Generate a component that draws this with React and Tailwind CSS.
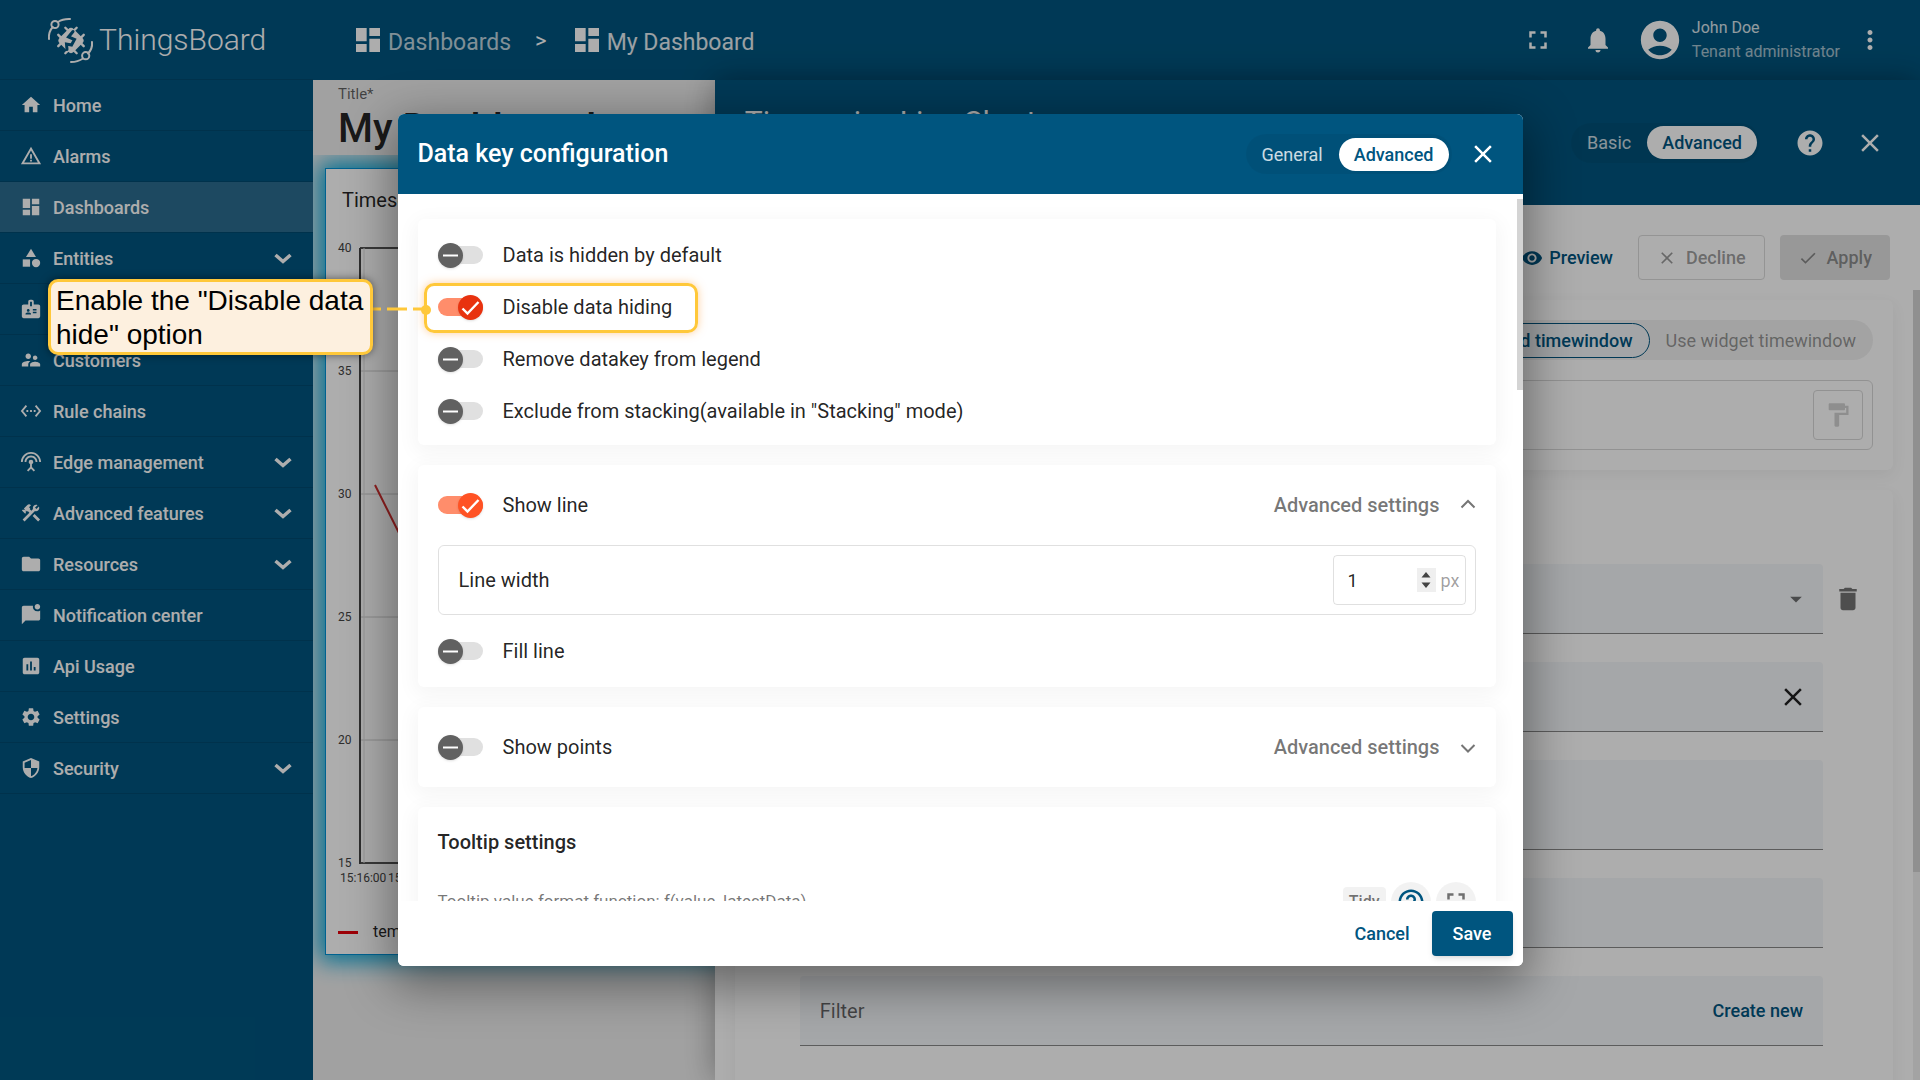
import { useState } from 'react';
import {
  MdHome, MdWarningAmber, MdDashboard, MdCategory, MdBadge, MdSupervisorAccount,
  MdSettingsEthernet, MdSettingsInputAntenna, MdConstruction, MdFolder, MdMarkChatUnread,
  MdInsertChart, MdSettings, MdSecurity, MdNotifications, MdAccountCircle, MdMoreVert,
  MdFullscreen, MdHelp, MdClose, MdVisibility, MdDone, MdFormatPaint, MdDelete,
  MdHelpOutline, MdArrowDropDown,
} from 'react-icons/md';

const menu = [
  { name: 'Home', icon: MdHome },
  { name: 'Alarms', icon: MdWarningAmber },
  { name: 'Dashboards', icon: MdDashboard, active: true },
  { name: 'Entities', icon: MdCategory, expandable: true },
  { name: 'Profiles', icon: MdBadge, expandable: true, covered: true },
  { name: 'Customers', icon: MdSupervisorAccount },
  { name: 'Rule chains', icon: MdSettingsEthernet },
  { name: 'Edge management', icon: MdSettingsInputAntenna, expandable: true },
  { name: 'Advanced features', icon: MdConstruction, expandable: true },
  { name: 'Resources', icon: MdFolder, expandable: true },
  { name: 'Notification center', icon: MdMarkChatUnread },
  { name: 'Api Usage', icon: MdInsertChart },
  { name: 'Settings', icon: MdSettings },
  { name: 'Security', icon: MdSecurity, expandable: true },
];

const Logo = () => (
  <svg viewBox="0 0 48 48" className="w-12 h-12" fill="none" stroke="white" strokeWidth="2" strokeLinecap="round">
    <path d="M2 23C1.500 18 3 14 5.800 11M11 6C14 4 18 2.800 23 3" />
    <circle cx="8" cy="8.500" r="3.600" />
    <path d="M45 26C45.500 31 44 34.500 41 37.500M36 42.500C33 44.500 29 46 24 46" />
    <circle cx="38.700" cy="39.700" r="3.600" />
    <g transform="translate(24 24.500) rotate(45)">
      <rect x="-10" y="-10" width="20" height="20" rx="4" fill="white" stroke="none" />
      <path d="M-5 -13V13M5 -13V13M-13 -5H13M-13 5H13" strokeWidth="2.400" />
    </g>
    <path d="M26 15.500l-4.500 5.500 6 2.500-3 5.500-5-1 .5 5.500" stroke="#00557f" strokeWidth="3" />
  </svg>
);

const Sidebar = () => (
  <aside className="w-[313px] shrink-0 bg-[#00557f] text-white">
    <div className="h-[79px] flex items-center gap-1 pl-[47px]">
      <Logo />
      <span className="text-[30px] leading-10 font-light">ThingsBoard</span>
    </div>
    <nav>
      {menu.map(({ name, icon: Icon, active, expandable, covered }) => (
        <a
          key={name}
          href="#"
          aria-label={name}
          className={`h-[51px] flex items-center px-5 border-t border-[#004b70] ${active ? 'bg-[#2b6c8f]' : ''}`}
        >
          <Icon className="w-[22px] h-[22px] mr-[11px] shrink-0" />
          {!covered && <span className="flex-1 text-[18px] font-medium">{name}</span>}
          {expandable && !covered && (
            <svg viewBox="0 0 20 20" className="w-5 h-5" fill="none" stroke="white" strokeWidth="3.500">
              <path d="M2.500 7l7.500 6.500 7.500-6.500" />
            </svg>
          )}
        </a>
      ))}
      <div className="border-t border-[#004b70]" />
    </nav>
  </aside>
);

const TopBar = () => (
  <header className="h-20 shrink-0 flex items-center bg-[#00557f] text-white pl-[39px] pr-[35px]">
    <a href="#" className="flex items-center gap-1 text-[23px]">
      <MdDashboard className="w-8 h-8" />
      <span className="pt-[6px] text-white/75">Dashboards</span>
    </a>
    <span className="px-6 text-[22px]">&gt;</span>
    <a href="#" className="flex items-center gap-1 text-[23px]">
      <MdDashboard className="w-8 h-8" />
      <span className="pt-[6px] text-white/90">My Dashboard</span>
    </a>
    <div className="ml-auto flex items-center">
      <button aria-label="Fullscreen"><MdFullscreen className="w-[30px] h-[30px]" /></button>
      <button aria-label="Notifications" className="ml-[30px]"><MdNotifications className="w-[30px] h-[30px]" /></button>
      <MdAccountCircle className="w-[46px] h-[46px] ml-6" />
      <div className="ml-[9px] leading-6">
        <p className="text-[16px] text-white/85">John Doe</p>
        <p className="text-[16px] text-white/65">Tenant administrator</p>
      </div>
      <button aria-label="More" className="ml-[15px]"><MdMoreVert className="w-[30px] h-[30px]" /></button>
    </div>
  </header>
);

const ticks = [40, 35, 30, 25, 20, 15];

const Chart = () => (
  <svg className="w-[380px] h-[660px]" fontSize="12" fill="#444">
    {ticks.map((t, i) => (
      <g key={t}>
        <line x1="34" x2="380" y1={19 + i * 123} y2={19 + i * 123} stroke={i === 0 || i === 5 ? '#555' : '#ccc'} strokeWidth={i === 0 || i === 5 ? 2 : 1} />
        <text x="12" y={23 + i * 123}>{t}</text>
      </g>
    ))}
    <line x1="38" x2="38" y1="19" y2="634" stroke="#ddd" />
    <line x1="34" x2="34" y1="19" y2="635" stroke="#444" strokeWidth="2" />
    <text x="14" y="653">15:16:00</text>
    <text x="62" y="653">15:16:05</text>
    <polyline points="49,256 78,314 120,396" fill="none" stroke="#d32f2f" strokeWidth="2" />
  </svg>
);

const Dashboard = () => (
  <section className="flex-1 min-w-0 overflow-hidden bg-[#eee]">
    <div className="h-[75px] pl-[25px] pt-[2px]">
      <p className="text-[15px] leading-6 text-black/60">Title*</p>
      <h1 className="text-[40px] leading-[46px] font-medium whitespace-nowrap">My Dashboard</h1>
    </div>
    <div className="overflow-hidden pt-[13px] pl-3 h-[930px]">
      <div className="w-[600px] h-[787px] bg-white border border-[#0091d5] shadow-[0_0_22px_6px_#00a5d8]">
        <p className="h-[60px] pl-4 pt-4 text-[20px] leading-[30px]">Timeseries Line Chart</p>
        <Chart />
        <div className="flex items-center pl-3 pt-[31px] text-[16px] leading-6">
          <span className="w-5 h-[3px] bg-red-600 mr-[15px]" />
          temperature
        </div>
      </div>
    </div>
  </section>
);

// Rounded two-option toggle used in dialog headers
const HeaderToggle = ({ first, second }) => (
  <div className="h-10 flex items-center rounded-full bg-black/5 pl-4 pr-[3px] text-[18px]">
    <button className="text-white/80 mr-4">{first}</button>
    <button className="h-[33px] px-[15px] rounded-full bg-white text-[#00557f] font-medium">{second}</button>
  </div>
);

const fieldClass = 'bg-[#f4f6f9] border-b border-[#888] rounded-t';

const WidgetDrawer = () => (
  <section className="w-3/4 shrink-0 flex flex-col bg-white shadow-[0_0_30px_rgba(0,0,0,0.35)]">
    <div className="h-[125px] shrink-0 flex items-center bg-[#00557f] text-white pl-[30px] pr-[35px]">
      <h2 className="flex-1 self-start mt-[22px] text-[30px] leading-10">Timeseries Line Chart</h2>
      <HeaderToggle first="Basic" second="Advanced" />
      <button aria-label="Help" className="ml-[35px]"><MdHelp className="w-[30px] h-[30px]" /></button>
      <button aria-label="Close" className="ml-[30px]"><MdClose className="w-[30px] h-[30px]" /></button>
    </div>
    <div className="h-[85px] shrink-0 flex items-center justify-end pr-[30px] pt-5 text-[18px] font-medium">
      <button className="flex items-center gap-[6px] text-[#00557f] mr-[25px]">
        <MdVisibility className="w-[22px] h-[22px]" />
        Preview
      </button>
      <button className="h-[45px] flex items-center gap-[9px] px-[18px] mr-[15px] rounded border border-[#dadada] text-black/40">
        <MdClose className="w-5 h-5" />
        Decline
      </button>
      <button className="h-[45px] flex items-center gap-[9px] px-[18px] rounded bg-black/12 text-black/40">
        <MdDone className="w-5 h-5" />
        Apply
      </button>
    </div>
    <div className="flex-1 min-h-0 flex">
      <div className="flex-1 pl-5 pr-5 pt-[10px] overflow-hidden">
        <div className="rounded-md bg-white p-5 shadow-[0_5px_16px_rgba(0,0,0,0.06)]">
          <div className="flex justify-end">
            <div className="h-10 flex items-center rounded-full bg-black/6 p-[3px] pr-[17px] text-[18px]">
              <button className="h-[35px] px-4 mr-4 rounded-full border border-[#00557f] bg-[#f0f4f7] text-[#00557f] font-medium">
                Use dashboard timewindow
              </button>
              <button className="text-black/40">Use widget timewindow</button>
            </div>
          </div>
          <div className="h-[70px] mt-5 flex items-center justify-end pr-[9px] rounded-md border border-[#d8d8d8]">
            <button aria-label="Timewindow style" className="w-[50px] h-[50px] flex items-center justify-center rounded border border-[#d8d8d8]">
              <MdFormatPaint className="w-[28px] h-[28px] text-black/18" />
            </button>
          </div>
        </div>
        <div className="mt-5 h-[700px] rounded-md bg-white pt-[74px] pl-[65px] pr-5 shadow-[0_5px_16px_rgba(0,0,0,0.06)]">
          <div className="flex items-center">
            <div className={`flex-1 h-[70px] flex items-center relative ${fieldClass}`}>
              <select aria-label="Datasource type" className="w-full h-full appearance-none bg-transparent" />
              <MdArrowDropDown className="absolute right-[13px] w-[28px] h-[28px] text-black/55 pointer-events-none" />
            </div>
            <button aria-label="Remove datasource" className="w-[50px] flex justify-center">
              <MdDelete className="w-[30px] h-[30px] text-black/55" />
            </button>
          </div>
          <div className="mr-[50px] mt-7 flex flex-col gap-7 text-[20px]">
            <div className={`h-[70px] flex items-center justify-end pr-[15px] ${fieldClass}`}>
              <button aria-label="Clear"><MdClose className="w-[30px] h-[30px]" /></button>
            </div>
            <input aria-label="Data keys" className={`h-[90px] ${fieldClass}`} />
            <input aria-label="Latest data keys" className={`h-[70px] ${fieldClass}`} />
            <div className={`h-[70px] flex items-center px-5 ${fieldClass}`}>
              <input aria-label="Filter" placeholder="Filter" className="flex-1 bg-transparent placeholder:text-black/60" />
              <button className="text-[18px] font-medium text-[#00557f]">Create new</button>
            </div>
          </div>
        </div>
      </div>
      <div className="w-[7px] bg-[#f1f1f1]">
        <div className="h-[582px] bg-[#d4d4d4]" />
      </div>
    </div>
  </section>
);

const Switch = ({ label, defaultOn = false, strong = false }) => {
  const [on, setOn] = useState(defaultOn);
  const thumbOn = strong ? 'bg-[#e8320f]' : 'bg-[#ff5224]';
  return (
    <label className="h-8 flex items-center gap-5 text-[20px] cursor-pointer">
      <input type="checkbox" className="sr-only" checked={on} onChange={() => setOn(!on)} />
      <span className={`w-[45px] h-[18px] rounded-full flex items-center ${on ? 'bg-[#ff8d6b] justify-end' : 'bg-[#e0e0e0]'}`}>
        <span className={`w-[25px] h-[25px] rounded-full shrink-0 shadow ${on ? thumbOn : 'bg-[#616161]'}`}>
          <svg viewBox="0 0 25 25" fill="none" stroke="white" strokeWidth="2">
            {on ? <path d="M4.500 13.500l5 5L20.500 7" strokeWidth="2.400" /> : <path d="M5 12.500h15" />}
          </svg>
        </span>
      </span>
      {label}
    </label>
  );
};

const AdvancedToggle = ({ open }) => (
  <button className="flex items-center gap-5 text-[20px] font-medium text-black/54">
    Advanced settings
    <svg viewBox="0 0 16 16" className="w-4 h-4" fill="none" stroke="currentColor" strokeWidth="2">
      {open ? <path d="M1.500 10.500L8 4l6.500 6.500" /> : <path d="M1.500 6L8 12.500 14.500 6" />}
    </svg>
  </button>
);

const Card = ({ children, className = '' }) => (
  <div className={`rounded-md bg-white shadow-[0_5px_20px_4px_rgba(0,0,0,0.04)] ${className}`}>{children}</div>
);

const DataKeyDialog = () => (
  <div role="dialog" aria-label="Data key configuration" className="relative w-[1125px] h-[852px] max-h-[80vh] flex flex-col rounded-md overflow-hidden bg-white text-black/87">
    <div className="h-20 shrink-0 flex items-center bg-[#00557f] text-white pl-5 pr-[25px]">
      <h2 className="flex-1 text-[25px] font-medium">Data key configuration</h2>
      <HeaderToggle first="General" second="Advanced" />
      <button aria-label="Close" className="ml-4"><MdClose className="w-[30px] h-[30px]" /></button>
    </div>
    <div className="flex-1 min-h-0 flex overflow-hidden">
      <div className="flex-1 flex flex-col gap-5 pl-5 pr-[21px] pt-[25px]">
        <Card className="p-5 pb-[18px] flex flex-col gap-5">
          <Switch label="Data is hidden by default" />
          <Switch label="Disable data hiding" defaultOn strong />
          <Switch label="Remove datakey from legend" />
          <Switch label={'Exclude from stacking(available in "Stacking" mode)'} />
        </Card>
        <Card className="p-5">
          <div className="h-10 flex items-center justify-between">
            <Switch label="Show line" defaultOn />
            <AdvancedToggle open />
          </div>
          <div className="h-[70px] my-5 flex items-center justify-between pl-5 pr-[9px] rounded-md border border-black/12">
            <label htmlFor="line-width" className="text-[20px]">Line width</label>
            <div className="w-[133px] h-[50px] flex items-center pl-[14px] pr-[5px] rounded border border-black/12">
              <input id="line-width" type="text" inputMode="numeric" defaultValue="1" className="min-w-0 flex-1 text-[18px]" />
              <span className="w-[19px] h-6 mr-[5px] flex items-center justify-center bg-[#efefef]">
                <svg viewBox="0 0 10 16" className="w-[10px] h-4" fill="#444">
                  <path d="M5 0l4.500 5.500h-9zM5 16l4.500-5.500h-9z" />
                </svg>
              </span>
              <span className="text-[18px] text-black/38">px</span>
            </div>
          </div>
          <Switch label="Fill line" />
        </Card>
        <Card className="p-5">
          <div className="h-10 flex items-center justify-between">
            <Switch label="Show points" />
            <AdvancedToggle />
          </div>
        </Card>
        <Card className="p-5 flex flex-col gap-[25px]">
          <h3 className="text-[20px] leading-[30px] font-medium">Tooltip settings</h3>
          <div className="h-10 flex items-center gap-[5px] text-black/54">
            <span className="flex-1 text-[17px]">Tooltip value format function: f(value, latestData)</span>
            <button className="h-[30px] px-[6px] rounded bg-black/5 text-[16px] font-medium">Tidy</button>
            <button aria-label="Function help" className="w-10 h-10 flex items-center justify-center rounded-full bg-black/5 text-[#00557f]">
              <MdHelpOutline className="w-[30px] h-[30px]" />
            </button>
            <button aria-label="Expand editor" className="w-10 h-10 flex items-center justify-center rounded-full bg-black/5">
              <MdFullscreen className="w-[30px] h-[30px]" />
            </button>
          </div>
        </Card>
      </div>
      <div className="w-[6px] pt-[5px]">
        <div className="h-[191px] bg-[#d4d4d4]" />
      </div>
    </div>
    <div className="h-[65px] shrink-0 flex items-center justify-end gap-[22px] pr-[10px] bg-white text-[18px] font-medium relative">
      <button className="text-[#00557f]">Cancel</button>
      <button className="h-[45px] px-[21px] rounded bg-[#00557f] text-white shadow-md">Save</button>
    </div>
  </div>
);

// Guide note with a dashed pointer to the highlighted switch
const Callout = () => (
  <>
    <div className="absolute left-[424px] top-[283px] w-[274px] h-[50px] rounded-[10px] border-3 border-[#ffc83a] shadow-[0_0_8px_rgba(255,160,60,0.5)]" />
    <svg className="absolute left-[373px] top-[300px] w-[60px] h-5">
      <line x1="0" x2="52" y1="9" y2="9" stroke="#ffc83a" strokeWidth="3" strokeDasharray="20 6" strokeDashoffset="12" />
      <circle cx="53" cy="10" r="5" fill="#ffc83a" />
    </svg>
    <p className="absolute left-12 top-[279px] w-[325px] h-[76px] pl-[5px] pt-[2px] rounded-[10px] border-3 border-[#ffc83a] bg-[#fdf0df] text-[28px] leading-[34px] whitespace-nowrap text-black font-['Liberation_Sans',sans-serif] shadow-[0_0_8px_rgba(0,0,0,0.5)]">
      Enable the "Disable data
      <br />
      hide" option
    </p>
  </>
);

const App = () => (
  <div className="relative h-screen flex overflow-hidden font-[Roboto,sans-serif] text-black/87">
    <Sidebar />
    <div className="flex-1 min-w-0 flex flex-col">
      <TopBar />
      <main className="flex-1 min-h-0 flex">
        <Dashboard />
        <WidgetDrawer />
      </main>
    </div>
    <div className="absolute inset-0 flex items-center justify-center bg-black/32">
      <div className="rounded-md shadow-[0_14px_48px_6px_rgba(0,0,0,0.4)]">
        <DataKeyDialog />
      </div>
    </div>
    <Callout />
  </div>
);

export default App;
